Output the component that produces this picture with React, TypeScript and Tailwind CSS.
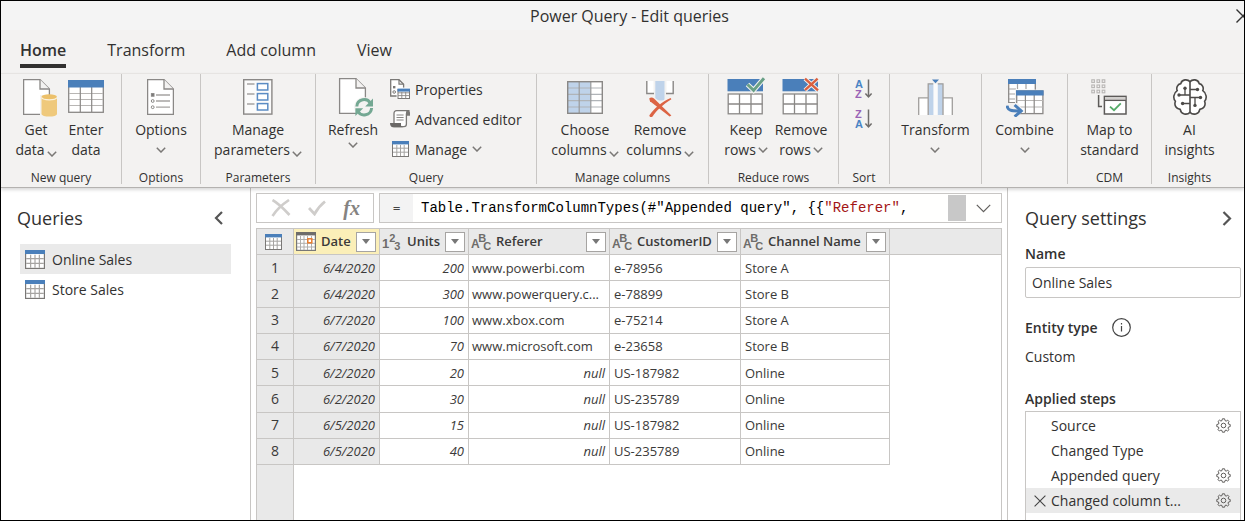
import type { ReactNode } from 'react';

const GREY = '#8a8886';
const BLUE = '#4a7fba';

function Chevron({ className = '' }: { className?: string }) {
  return (
    <svg width="10" height="6" viewBox="0 0 10 6" className={`shrink-0 ${className}`} fill="none" stroke="#7a7876" strokeWidth="1.5">
      <path d="M0.8 0.8 L5 5 L9.2 0.8" />
    </svg>
  );
}

function PageShape() {
  return (
    <>
      <path d="M0.6 0.6 H17 L26.4 10 V35.4 H0.6 Z" fill="#fff" stroke={GREY} strokeWidth="1.3" />
      <path d="M17 0.6 V10 H26.4" fill="#f3f2f1" stroke={GREY} strokeWidth="1.3" />
    </>
  );
}

function GetDataIcon() {
  return (
    <svg width="34" height="38" viewBox="0 0 34 38" className="ml-2">
      <PageShape />
      <path d="M17 16 H35 V38 H17 Z" fill="#f3f2f1" />
      <path d="M18.5 18 V35 C18.5 38.4 34 38.4 34 35 V18 Z" fill="#efc97c" />
      <ellipse cx="26.2" cy="17.8" rx="7.7" ry="2.6" fill="#ecc06a" />
      <path d="M18.5 18.4 C19.5 21.6 33 21.6 34 18.4" fill="none" stroke="#fbf1dc" strokeWidth="1.2" />
    </svg>
  );
}

function EnterDataIcon() {
  return (
    <svg width="36" height="34" viewBox="0 -1 36 34">
      <rect x="0.7" y="0.7" width="34.6" height="31.6" fill="#fff" stroke={GREY} strokeWidth="1.3" />
      <path d="M1 13.5 H35 M1 19.5 H35 M1 25.5 H35" stroke="#b8b6b4" strokeWidth="1.2" />
      <path d="M12.3 7 V32 M23.7 7 V32" stroke={GREY} strokeWidth="1.2" />
      <rect x="0" y="0" width="36" height="7.5" fill={BLUE} />
    </svg>
  );
}

function OptionsIcon() {
  return (
    <svg width="27" height="36" viewBox="0 0 27 36">
      <PageShape />
      <rect x="4.4" y="14.6" width="2.6" height="2.6" fill="#777" stroke={GREY} />
      <circle cx="5.7" cy="22" r="1.4" fill="none" stroke={GREY} />
      <circle cx="5.7" cy="28.2" r="1.4" fill="none" stroke={GREY} />
      <path d="M9 16 H23 M9 22 H23 M9 28.2 H23" stroke="#a6a4a2" strokeWidth="1.3" />
    </svg>
  );
}

function ParametersIcon() {
  return (
    <svg width="30" height="36" viewBox="0 0 30 36">
      <rect x="0.7" y="0.7" width="28.2" height="34.4" fill="#fbfbfb" stroke={GREY} strokeWidth="1.4" />
      <path d="M4 5 H11.5 M4 15 H11.5 M4 25 H11.5" stroke="#a6a4a2" strokeWidth="1.3" />
      <g fill="#fff" stroke="#5b8cc4" strokeWidth="1.5">
        <rect x="14.4" y="4.6" width="10.4" height="6.4" />
        <rect x="14.4" y="14.6" width="10.4" height="6.4" />
        <rect x="14.4" y="24.6" width="10.4" height="6.4" />
      </g>
    </svg>
  );
}

function RefreshIcon() {
  return (
    <svg width="35" height="39" viewBox="0 1 35 39" className="ml-[6px] overflow-visible">
      <PageShape />
      <circle cx="25" cy="29" r="10" fill="#f3f2f1" />
      <g fill="none" stroke="#74a893" strokeWidth="3">
        <path d="M17.8 28.5 C18.2 20.5 28.5 19.6 31.2 25" />
        <path d="M32.6 30 C32 38 21.8 38.8 19 33.4" />
      </g>
      <path d="M34 20.5 V28.4 H26.2 Z" fill="#74a893" />
      <path d="M16.4 38 V30.2 H24.2 Z" fill="#74a893" />
    </svg>
  );
}

function PropertiesIcon() {
  return (
    <svg width="20" height="20" viewBox="0 0 20 20">
      <path d="M0.7 0.7 H9 L13.6 5.2 V17 H0.7 Z" fill="#fff" stroke="#7a7876" strokeWidth="1.3" />
      <path d="M9 0.7 V5.2 H13.6" fill="none" stroke="#7a7876" strokeWidth="1.2" />
      <rect x="3" y="7" width="2.4" height="2.4" fill="#7a7876" />
      <circle cx="4.2" cy="13" r="1.3" fill="none" stroke="#7a7876" />
      <rect x="6.6" y="8.6" width="14" height="12" fill="#fff" />
      <rect x="8" y="10.5" width="11.5" height="9" fill="#fff" stroke="#7a7876" />
      <path d="M8 13.8 H19.5 M8 16.6 H19.5 M11.8 13 V19.5 M15.7 13 V19.5" stroke="#8a8886" strokeWidth="0.9" />
      <rect x="7.5" y="9.6" width="12.5" height="3" fill={BLUE} />
    </svg>
  );
}

function ScriptIcon() {
  return (
    <svg width="20" height="18" viewBox="0 0 20 18">
      <path d="M4 13 V3.5 C4 1.5 5 0.7 6.6 0.7 H18 C16.5 1.6 16.4 2.6 16.4 4 V14 C16.4 16 15.6 16.6 14 16.6 H4 Z" fill="#fff" stroke="#7a7876" strokeWidth="1.3" />
      <path d="M16.2 5.8 V3 C16.2 -0.2 20 -0.2 20 3 V5.8 Z" fill="#7a7876" />
      <path d="M0 13 H11 V15 C11 16.6 12 17.2 13.4 17.2 H3 C1 17.2 0 15.5 0 13 Z" fill="#6a6866" />
      <path d="M6.5 5 H13.6 M6.5 7.5 H13.6 M6.5 10 H13.6" stroke="#8a8886" strokeWidth="1" />
    </svg>
  );
}

function TableIcon({ width = 17, height = 16 }: { width?: number; height?: number }) {
  return (
    <svg width={width} height={height} viewBox="0 0 17 16" preserveAspectRatio="none" className="shrink-0">
      <rect x="0.5" y="0.5" width="16" height="15" fill="#fff" stroke="#7a7876" />
      <path d="M1 7.2 H16 M1 11.2 H16 M4.8 4 V15 M8.5 4 V15 M12.2 4 V15" stroke="#a6a4a2" />
      <rect x="0" y="0" width="17" height="3.4" fill={BLUE} />
    </svg>
  );
}

function ChooseColumnsIcon() {
  return (
    <svg width="36" height="35" viewBox="0 -2 36 35">
      <rect x="0.7" y="0.7" width="34.6" height="31.6" fill="#fff" />
      <rect x="1" y="1" width="22.7" height="31" fill="#bfd3ea" />
      <path d="M1 7 H35 M1 13.3 H35 M1 19.6 H35 M1 26 H35" stroke="#b0b4b8" strokeWidth="1.2" />
      <path d="M12.2 1 V32 M23.8 1 V32" stroke="#9a9a9a" strokeWidth="1.2" />
      <rect x="0.7" y="0.7" width="34.6" height="31.6" fill="none" stroke={GREY} strokeWidth="1.4" />
    </svg>
  );
}

function RemoveColumnsIcon() {
  return (
    <svg width="28" height="39" viewBox="0 -2 28 39">
      <path d="M0.7 0 V12.6 H7.5 V0 M27.3 0 V12.6 H20.5 V0" fill="#fff" />
      <path d="M0.8 0 V12.5 H8 M27.2 0 V12.5 H20" fill="none" stroke={GREY} strokeWidth="1.4" />
      <rect x="9.3" y="0" width="9.2" height="19.5" fill="#bfd3ea" />
      <path d="M4.6 17.6 C9 19 18 27 24.6 34.8 M25 17.8 C18 21 9 28.5 4.4 35.4" fill="none" stroke="#f3f2f1" strokeWidth="5" />
      <path d="M3.2 17.4 C5 16 6.8 16.6 8 17.6 L25.4 34.4 L23.6 35.6 L4 20.2 Z" fill="#dc6444" />
      <path d="M24.6 17 L25.4 18.2 C17 23.5 10.4 29.5 6.6 35.4 C5 36.6 3.2 36 3.4 34.2 C8 27.5 16 20.5 24.6 17 Z" fill="#dc6444" />
    </svg>
  );
}

function RowsIcon({ kind }: { kind: 'keep' | 'remove' }) {
  return (
    <svg width="38" height="36" viewBox="0 2 38 36" className="overflow-visible">
      <rect x="0.5" y="2" width="35.5" height="12.3" fill={BLUE} />
      <rect x="1.2" y="17" width="34" height="19.8" fill="#fff" stroke={GREY} strokeWidth="1.3" />
      <path d="M1 27 H35.5 M12.5 17 V37 M24 17 V37" stroke={GREY} strokeWidth="1.3" />
      {kind === 'keep' ? (
        <>
          <path d="M20.5 7.5 L26.6 13.4 L37 1.2" fill="none" stroke="#f3f2f1" strokeWidth="5" />
          <path d="M20.5 7.5 L26.6 13.4 L37 1.2" fill="none" stroke="#69a086" strokeWidth="3" />
        </>
      ) : (
        <>
          <path d="M23 1.6 L36 13.4 M35.6 1.6 L23 13.2" fill="none" stroke="#f3f2f1" strokeWidth="4.2" />
          <path d="M23 1.6 L36 13.4 M35.6 1.6 L23 13.2" fill="none" stroke="#d9603f" strokeWidth="2.4" />
        </>
      )}
    </svg>
  );
}

function SortIcon({ first, second }: { first: string; second: string }) {
  const colour = (letter: string) => (letter === 'A' ? '#4a84c4' : '#9a63b5');
  return (
    <svg width="18" height="20" viewBox="0 0 18 20" fontFamily="Liberation Sans, sans-serif" fontSize="11" fontWeight="bold">
      <text x="0" y="8.6" fill={colour(first)}>{first}</text>
      <text x="0" y="18.6" fill={colour(second)}>{second}</text>
      <path d="M13.5 0.5 V18 M10.4 14.6 L13.5 18 L16.6 14.6" fill="none" stroke="#6f6d6b" strokeWidth="1.5" />
    </svg>
  );
}

function TransformIcon() {
  return (
    <svg width="35" height="36" viewBox="0 0 35 36">
      <path d="M0.7 36 V18.8 H9.6 V36" fill="#fff" />
      <path d="M34.3 36 V18.8 H25.4 V36" fill="#fff" />
      <rect x="15" y="5" width="5" height="31" fill="#fbfbfb" />
      <rect x="10.4" y="4.5" width="5" height="31.5" fill="#bfd3ea" />
      <rect x="19.8" y="4.5" width="5" height="31.5" fill="#bfd3ea" />
      <path d="M0.7 36 V18.8 H10.2 M10.2 36 V4.8 H15.2 M34.3 36 V18.8 H25 M25 36 V4.8 H19.8" fill="none" stroke="#a09e9c" strokeWidth="1.3" />
      <path d="M14 0.5 H21 L17.5 4.2 Z" fill={BLUE} />
    </svg>
  );
}

function CombineIcon() {
  return (
    <svg width="38" height="38" viewBox="0 0 38 38">
      <rect x="2.7" y="0.7" width="26.6" height="23" fill="#fff" stroke={GREY} strokeWidth="1.3" />
      <path d="M3 10 H10 M3 15 H10 M3 20 H10 M11.5 5 V10 M20 5 V10" stroke="#a6a4a2" strokeWidth="1.2" />
      <rect x="2" y="0" width="28" height="5" fill={BLUE} />
      <rect x="9" y="10.6" width="29" height="27.4" fill="#f3f2f1" />
      <rect x="10.7" y="12" width="26.2" height="22.6" fill="#fff" stroke={GREY} strokeWidth="1.3" />
      <path d="M10.7 21.5 H37 M10.7 28 H37" stroke="#b8b6b4" strokeWidth="1.2" />
      <path d="M19.4 16 V35 M28.2 16 V35" stroke={GREY} strokeWidth="1.2" />
      <rect x="10" y="11.3" width="27.6" height="5.2" fill={BLUE} />
      <path d="M0 24 H12 L17.5 32 L10 38 H0 Z" fill="#f3f2f1" />
      <path d="M1 26.6 C1.6 31.4 5 32 14 32" fill="none" stroke={BLUE} strokeWidth="3" />
      <path d="M8.6 26 L15.2 32 L8.6 37.6" fill="none" stroke={BLUE} strokeWidth="3" />
    </svg>
  );
}

function MapIcon() {
  return (
    <svg width="36" height="36" viewBox="0 0 36 36" fill="none">
      <g stroke="#b8b6b4" strokeWidth="1.1">
        {[0.8, 6, 11.2].map((y) =>
          [0.8, 6, 11.2].map((x) => <rect key={`${x}-${y}`} x={x} y={y} width="2.6" height="2.6" />),
        )}
      </g>
      <path d="M7.6 16 V27.4 H11" stroke="#5c5a58" strokeWidth="1.5" />
      <rect x="13.4" y="17.4" width="21.6" height="17.6" fill="#fff" stroke="#5c5a58" strokeWidth="1.5" />
      <rect x="14" y="18" width="20.4" height="3" fill="#d2d0ce" />
      <path d="M13.4 21.4 H35" stroke="#5c5a58" strokeWidth="1.3" />
      <path d="M19 27.6 L23 31.2 L29.8 24.4" stroke="#55ab68" strokeWidth="1.8" />
    </svg>
  );
}

function BrainIcon() {
  return (
    <svg width="34" height="36" viewBox="0 0 34 36" fill="none" stroke="#4c4a48" strokeWidth="1.6">
      <path d="M17 2.6 C14.6 0 9 0 7.8 4.6 C4.4 5.4 3 8.6 4.2 11.6 C0.4 14 -0.2 19.6 2.4 22.2 C0.8 26.6 3.4 30 7.2 30.4 C8 35.6 14 36.4 17 33.4 C20 36.4 26 35.6 26.8 30.4 C30.6 30 33.2 26.6 31.6 22.2 C34.2 19.6 33.6 14 29.8 11.6 C31 8.6 29.6 5.4 26.2 4.6 C25 0 19.4 0 17 2.6 Z" fill="#fff" />
      <path d="M17 2.6 V33.4" />
      <g strokeWidth="1.3">
        <path d="M12 9.5 V16 M5.5 16 H17 M17 10.5 H24 M17 18.5 H27.5 M22 18.5 V26 M10 24.5 H17" />
      </g>
      <g fill="#4c4a48" stroke="none">
        <circle cx="12" cy="9.3" r="1.7" />
        <circle cx="6" cy="16" r="1.7" />
        <circle cx="24.5" cy="10.5" r="1.7" />
        <circle cx="27.5" cy="18.5" r="1.7" />
        <circle cx="22" cy="26.4" r="1.7" />
        <circle cx="9.6" cy="24.5" r="1.7" />
      </g>
    </svg>
  );
}

function GearIcon() {
  return (
    <svg width="15" height="15" viewBox="0 0 15 15" fill="none" stroke="#605e5c">
      <path
        d="M6.4 0.8 H8.6 L9 2.6 L10.2 3.1 L11.7 2.1 L13 3.6 L12.1 5 L12.5 6.1 L14.2 6.5 V8.6 L12.5 9 L12 10.1 L13 11.7 L11.5 13 L10.1 12.1 L9 12.5 L8.6 14.2 H6.4 L6 12.5 L4.9 12.1 L3.4 13 L2 11.6 L2.9 10.1 L2.5 9 L0.8 8.6 V6.5 L2.5 6.1 L3 5 L2 3.5 L3.5 2.1 L4.9 3 L6 2.6 Z"
        strokeWidth="1"
      />
      <circle cx="7.5" cy="7.5" r="2.3" strokeWidth="1" />
    </svg>
  );
}

function TypeIcon({ type }: { type: 'date' | 'number' | 'text' }) {
  if (type === 'date') {
    return (
      <svg width="20" height="19" viewBox="0 0 20 19" className="shrink-0">
        <rect x="0.6" y="0.6" width="18.8" height="17.8" fill="#fff" stroke="#777" strokeWidth="1.2" />
        <path d="M1 7.5 H19 M1 11.3 H19 M1 15 H19 M4.5 4 V18 M8 4 V18 M11.5 4 V18 M15.5 4 V18" stroke="#b0aeac" />
        <rect x="0" y="0" width="20" height="3.4" fill="#6e6c6a" />
        <rect x="11.8" y="6.8" width="4" height="4" fill="#fff" stroke="#e87b2c" strokeWidth="1.5" />
      </svg>
    );
  }
  const letters = type === 'number' ? ['1', '2', '3'] : ['A', 'B', 'C'];
  return (
    <svg width="20" height="20" viewBox="0 0 20 20" className="shrink-0" fill="#6e6c6a" fontFamily="Liberation Sans, sans-serif" fontWeight="bold">
      <text x="0" y="16" fontSize={type === 'number' ? 13 : 12}>{letters[0]}</text>
      <text x="7.2" y="9.6" fontSize="11">{letters[1]}</text>
      <text x="12.2" y="18.4" fontSize="11">{letters[2]}</text>
    </svg>
  );
}

function Group({ label, className, children }: { label: string; className: string; children?: ReactNode }) {
  return (
    <section className={`flex shrink-0 flex-col border-r border-[#c8c6c4] ${className}`}>
      <div className="flex flex-1 justify-center">{children}</div>
      <div className="h-3 whitespace-nowrap text-center text-[12px] leading-3">{label}</div>
    </section>
  );
}

const chevronPlace = {
  low: 'mt-2',
  middle: '',
  high: 'self-start mt-[2px]',
};

type BigButtonProps = {
  icon: ReactNode;
  first: string;
  second?: string;
  chevron?: keyof typeof chevronPlace;
  className?: string;
};

function BigButton({ icon, first, second, chevron, className = '' }: BigButtonProps) {
  return (
    <button type="button" className={`flex flex-col items-center pt-[5px] whitespace-nowrap ${className}`}>
      <span className="flex h-[41px] items-start justify-center">{icon}</span>
      <span className="leading-5">{first}</span>
      <span className="flex h-5 items-center gap-[2px] leading-5">
        {second}
        {chevron && <Chevron className={chevronPlace[chevron]} />}
      </span>
    </button>
  );
}

function SmallButton({ icon, label, chevron = false }: { icon: ReactNode; label: string; chevron?: boolean }) {
  return (
    <button type="button" className="flex h-[30px] items-center gap-[5px] whitespace-nowrap">
      <span className="flex w-5 justify-center">{icon}</span>
      {label}
      {chevron && <Chevron />}
    </button>
  );
}

const tabs = ['Home', 'Transform', 'Add column', 'View'];

function Ribbon() {
  return (
    <div className="relative z-10 flex h-[115px] items-stretch overflow-hidden border-y border-t-[#e6e4e2] border-b-[#b4b2b0] bg-[#f3f2f1] pb-[3px] text-[14px] text-[#323130] shadow-[0_2px_3px_rgba(0,0,0,0.15)]">
      <Group label="New query" className="w-[121px]">
        <BigButton icon={<GetDataIcon />} first="Get" second="data" chevron="low" className="w-[50px]" />
        <BigButton icon={<EnterDataIcon />} first="Enter" second="data" className="w-[50px]" />
      </Group>
      <Group label="Options" className="w-[79px]">
        <BigButton icon={<OptionsIcon />} first="Options" chevron="middle" />
      </Group>
      <Group label="Parameters" className="w-[115px]">
        <BigButton icon={<ParametersIcon />} first="Manage" second="parameters" chevron="low" />
      </Group>
      <Group label="Query" className="w-[221px]">
        <BigButton icon={<RefreshIcon />} first="Refresh" chevron="high" className="w-[74px]" />
        <div className="flex flex-1 flex-col">
          <SmallButton icon={<PropertiesIcon />} label="Properties" />
          <SmallButton icon={<ScriptIcon />} label="Advanced editor" />
          <SmallButton icon={<TableIcon />} label="Manage" chevron />
        </div>
      </Group>
      <Group label="Manage columns" className="w-[172px]">
        <BigButton icon={<ChooseColumnsIcon />} first="Choose" second="columns" chevron="low" className="w-[75px]" />
        <BigButton icon={<RemoveColumnsIcon />} first="Remove" second="columns" chevron="low" className="w-[75px]" />
      </Group>
      <Group label="Reduce rows" className="w-[130px]">
        <BigButton icon={<RowsIcon kind="keep" />} first="Keep" second="rows" chevron="middle" className="w-[55px]" />
        <BigButton icon={<RowsIcon kind="remove" />} first="Remove" second="rows" chevron="middle" className="w-[55px]" />
      </Group>
      <Group label="Sort" className="w-[51px]">
        <div className="flex flex-col gap-[10px] pt-[5px]">
          <button type="button" aria-label="Sort ascending"><SortIcon first="A" second="Z" /></button>
          <button type="button" aria-label="Sort descending"><SortIcon first="Z" second="A" /></button>
        </div>
      </Group>
      <Group label="" className="w-[92px]">
        <BigButton icon={<TransformIcon />} first="Transform" chevron="middle" />
      </Group>
      <Group label="" className="w-[86px]">
        <BigButton icon={<CombineIcon />} first="Combine" chevron="middle" />
      </Group>
      <Group label="CDM" className="w-[84px]">
        <BigButton icon={<MapIcon />} first="Map to" second="standard" />
      </Group>
      <Group label="Insights" className="w-[75px] border-r-0">
        <BigButton icon={<BrainIcon />} first="AI" second="insights" />
      </Group>
    </div>
  );
}

function QueriesPanel() {
  return (
    <aside className="w-[250px] shrink-0 border-r border-[#c8c6c4] pl-4 pt-[18px] pr-[19px]">
      <div className="flex h-6 items-center justify-between pr-2">
        <h2 className="text-[18px] leading-6">Queries</h2>
        <button type="button" aria-label="Collapse queries">
          <svg width="9" height="14" viewBox="0 0 9 14" fill="none" stroke="#555" strokeWidth="2.2"><path d="M8 1 L2 7 L8 13" /></svg>
        </button>
      </div>
      <ul className="ml-[3px] mt-[14px] text-[14px]">
        {['Online Sales', 'Store Sales'].map((name, i) => (
          <li key={name}>
            <button type="button" className={`flex h-[30px] w-full items-center gap-[7px] pl-[5px] ${i === 0 ? 'bg-[#eaeaea]' : ''}`}>
              <TableIcon width={20} height={19} />
              {name}
            </button>
          </li>
        ))}
      </ul>
    </aside>
  );
}

type Column = { name: string; type: 'date' | 'number' | 'text' };

const columns: Column[] = [
  { name: 'Date', type: 'date' },
  { name: 'Units', type: 'number' },
  { name: 'Referer', type: 'text' },
  { name: 'CustomerID', type: 'text' },
  { name: 'Channel Name', type: 'text' },
];

const rows: [string, string, string | null, string, string][] = [
  ['6/4/2020', '200', 'www.powerbi.com', 'e-78956', 'Store A'],
  ['6/4/2020', '300', 'www.powerquery.c...', 'e-78899', 'Store B'],
  ['6/7/2020', '100', 'www.xbox.com', 'e-75214', 'Store A'],
  ['6/7/2020', '70', 'www.microsoft.com', 'e-23658', 'Store B'],
  ['6/2/2020', '20', null, 'US-187982', 'Online'],
  ['6/2/2020', '30', null, 'US-235789', 'Online'],
  ['6/5/2020', '15', null, 'US-187982', 'Online'],
  ['6/5/2020', '40', null, 'US-235789', 'Online'],
];

function FormulaBar() {
  return (
    <div className="flex h-[30px] gap-[5px]">
      <div className="flex w-[118px] shrink-0 items-center justify-between border border-[#c8c6c4] pl-[14px] pr-[13px]">
        <button type="button" aria-label="Cancel">
          <svg width="20" height="18" viewBox="0 0 20 18" fill="none" stroke="#cfcdcb" strokeWidth="2.6"><path d="M1.5 1 C7 4 13 10 18.5 16 M18 1 C12 5 6 10 1.5 17" /></svg>
        </button>
        <button type="button" aria-label="Commit">
          <svg width="18" height="16" viewBox="0 0 18 16" fill="none" stroke="#cfcdcb" strokeWidth="2.8"><path d="M1 8 L6.5 14 C9 9.5 12.5 5 17 1.5" /></svg>
        </button>
        <button type="button" aria-label="Insert function" className="font-['Liberation_Serif',serif] text-[20px] font-bold italic leading-6 text-[#858381]">fx</button>
      </div>
      <div className="flex min-w-0 flex-1 items-stretch border border-[#c8c6c4] bg-[#fffffe]">
        <span className="flex w-[33px] shrink-0 items-center justify-center bg-[#f3f3f3] font-['DejaVu_Sans_Mono',monospace] text-[12px] text-[#444]">=</span>
        <code className="flex-1 self-center overflow-hidden whitespace-pre pl-2 font-['Liberation_Mono',monospace] text-[14px] text-black">
          Table.TransformColumnTypes(#"Appended query", {'{{'}<span className="text-[#a31515]">"Referer"</span>,
        </code>
        <span className="my-px w-[18px] shrink-0 bg-[#c8c8c8]" />
        <button type="button" aria-label="Expand formula" className="flex w-[35px] shrink-0 items-center justify-center">
          <svg width="15" height="9" viewBox="0 0 15 9" fill="none" stroke="#605e5c" strokeWidth="1.2"><path d="M0.8 0.8 L7.5 7.6 L14.2 0.8" /></svg>
        </button>
      </div>
    </div>
  );
}

function DataGrid() {
  const line = 'border-r border-b border-[#c8c6c4]';
  return (
    <div className="mt-[5px] flex flex-1 flex-col border-x border-t border-[#c8c6c4]">
      <table className="h-[236px] w-full table-fixed border-separate border-spacing-0 text-[13px] text-[#3b3a39]">
        <colgroup>
          <col className="w-[37px]" />
          <col className="w-[86px]" />
          <col className="w-[89px]" />
          <col className="w-[141px]" />
          <col className="w-[131px]" />
          <col className="w-[149px]" />
          <col />
        </colgroup>
        <thead>
          <tr className="h-[26px] bg-[#e9e9e9]">
            <th className={`${line} p-0`}>
              <span className="flex justify-center pr-1"><TableIcon /></span>
            </th>
            {columns.map((c) => (
              <th key={c.name} className={`${line} p-0 font-semibold ${c.type === 'date' ? 'bg-[#fbefb8]' : ''}`}>
                <div className="flex h-[25px] items-center gap-[5px] pl-[2px] pr-[3px]">
                  <TypeIcon type={c.type} />
                  <span className="flex-1 whitespace-nowrap text-left">{c.name}</span>
                  <button type="button" aria-label={`Filter ${c.name}`} className="flex h-5 w-5 shrink-0 items-center justify-center border border-[#a6a4a2] bg-white">
                    <svg width="8" height="5" viewBox="0 0 8 5"><path d="M0 0 H8 L4 5 Z" fill="#777" /></svg>
                  </button>
                </div>
              </th>
            ))}
            <th className="border-b border-[#c8c6c4]" aria-label="Blank" />
          </tr>
        </thead>
        <tbody>
          {rows.map((r, i) => (
            <tr key={i} className="leading-5">
              <td className={`${line} bg-[#e9e9e9] text-center text-[14px]`}>{i + 1}</td>
              <td className={`${line} bg-[#e9e9e9] pr-1 text-right italic`}>{r[0]}</td>
              <td className={`${line} pr-1 text-right italic`}>{r[1]}</td>
              <td className={`${line} ${r[2] ? 'pl-[3px]' : 'pr-1 text-right italic'} whitespace-nowrap`}>{r[2] ?? 'null'}</td>
              <td className={`${line} pl-1`}>{r[3]}</td>
              <td className={`${line} pl-1`}>{r[4]}</td>
              <td />
            </tr>
          ))}
        </tbody>
      </table>
      <div className="w-[37px] flex-1 border-r border-[#c8c6c4] bg-[#e9e9e9]" />
    </div>
  );
}

const steps = [
  { name: 'Source', gear: true },
  { name: 'Changed Type', gear: false },
  { name: 'Appended query', gear: true },
  { name: 'Changed column t...', gear: true, selected: true },
];

function SettingsPanel() {
  return (
    <aside className="flex w-[237px] shrink-0 flex-col border-l border-[#c8c6c4] pl-[17px] pr-[3px] pt-[18px] text-[14px]">
      <div className="flex h-6 items-center justify-between pr-[9px]">
        <h2 className="text-[18px] leading-6">Query settings</h2>
        <button type="button" aria-label="Collapse settings">
          <svg width="10" height="15" viewBox="0 0 10 15" fill="none" stroke="#555" strokeWidth="2.2"><path d="M1.5 1 L8 7.5 L1.5 14" /></svg>
        </button>
      </div>
      <label htmlFor="query-name" className="mt-[14px] font-semibold leading-5">Name</label>
      <input id="query-name" defaultValue="Online Sales" className="mt-[3px] h-[31px] w-full rounded-xs border border-[#c8c6c4] px-[6px]" />
      <div className="mt-[19px] flex h-5 items-center gap-[14px] font-semibold">
        Entity type
        <svg width="19" height="19" viewBox="0 0 19 19" fill="none" stroke="#444" strokeWidth="1.2">
          <circle cx="9.5" cy="9.5" r="8.8" />
          <path d="M9.5 8 V13.6 M9.5 5 V6.6" />
        </svg>
      </div>
      <div className="mt-[10px] leading-5">Custom</div>
      <div className="mt-[22px] font-semibold leading-5">Applied steps</div>
      <ol className="mt-[2px] flex-1 border border-b-0 border-[#c8c6c4] pt-px">
        {steps.map((s) => (
          <li key={s.name} className={`flex h-[25px] items-center pr-[9px] ${s.selected ? 'bg-[#eaeaea]' : ''}`}>
            <span className="flex w-[25px] justify-end pr-[5px]">
              {s.selected && (
                <svg width="12" height="12" viewBox="0 0 12 12" stroke="#444" strokeWidth="1.1"><path d="M0.6 0.6 L11.4 11.4 M11.4 0.6 L0.6 11.4" /></svg>
              )}
            </span>
            <span className="flex-1 whitespace-nowrap">{s.name}</span>
            {s.gear && <button type="button" aria-label={`Edit ${s.name}`}><GearIcon /></button>}
          </li>
        ))}
      </ol>
    </aside>
  );
}

export default function App() {
  return (
    <div className="flex min-h-screen flex-col border border-black bg-white font-['Open_Sans',sans-serif] text-[#323130]">
      <header className="flex h-[29px] items-center bg-[#f4f4f4]">
        <h1 className="ml-[22px] flex-1 text-center text-[16px]">Power Query - Edit queries</h1>
        <button type="button" aria-label="Close" className="w-2 overflow-hidden">
          <svg width="14" height="14" viewBox="0 0 14 14" className="max-w-none" stroke="#333" strokeWidth="1.4"><path d="M0.5 0.5 L13.5 13.5 M13.5 0.5 L0.5 13.5" /></svg>
        </button>
      </header>
      <nav className="flex h-[43px] items-start gap-[41px] bg-[#f3f2f1] pl-[19px] pt-2 text-[16px]">
        {tabs.map((t, i) => (
          <a key={t} href="#" className={`border-b-4 pb-[2px] leading-6 ${i === 0 ? 'border-[#323130] font-semibold' : 'border-transparent'}`}>{t}</a>
        ))}
      </nav>
      <Ribbon />
      <div className="flex flex-1">
        <QueriesPanel />
        <main className="flex min-w-0 flex-1 flex-col pl-[5px] pr-[5px] pt-[5px]">
          <FormulaBar />
          <DataGrid />
        </main>
        <SettingsPanel />
      </div>
    </div>
  );
}
